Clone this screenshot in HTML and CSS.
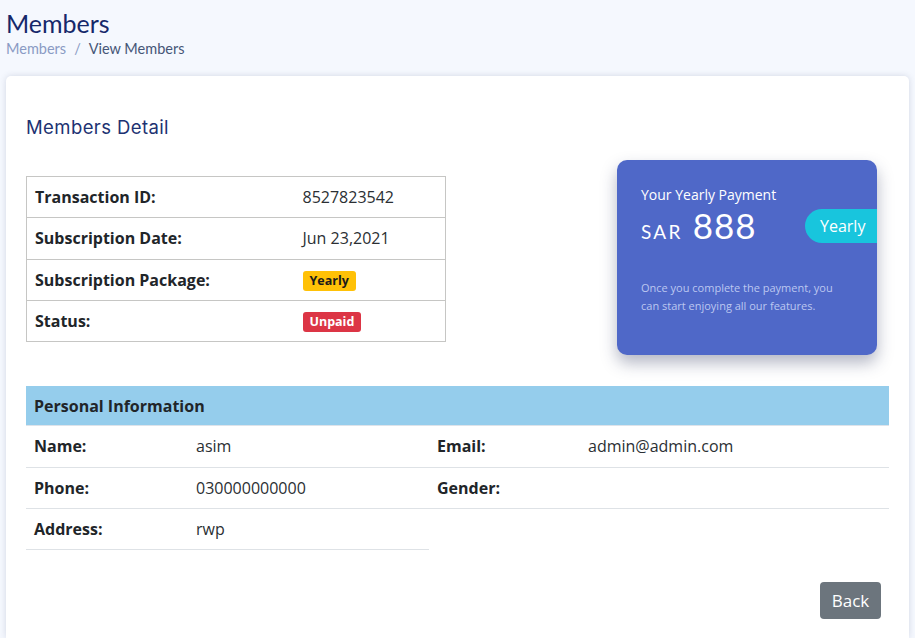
FILE: index.html
```
<!DOCTYPE html>
<html>
<head>
<meta charset="utf-8">
<link rel="stylesheet" href="styles.css">
</head>
<body>
<div class="page-head">
  <h1 class="page-title">Members</h1>
  <div class="crumbs"><span class="crumb-link">Members</span><span class="crumb-sep">/</span><span class="crumb-cur">View Members</span></div>
</div>
<div class="card">
  <h2 class="card-title">Members Detail</h2>
  <div class="top-row">
    <table class="tx-table">
      <tr><th>Transaction ID:</th><td>8527823542</td></tr>
      <tr><th>Subscription Date:</th><td>Jun 23,2021</td></tr>
      <tr><th>Subscription Package:</th><td><span class="badge badge-yellow">Yearly</span></td></tr>
      <tr><th>Status:</th><td><span class="badge badge-red">Unpaid</span></td></tr>
    </table>
    <div class="price-card">
      <div class="price-label">Your Yearly Payment</div>
      <div class="price-amount"><span class="cur">SAR</span><span class="num">888</span></div>
      <div class="price-pill">Yearly</div>
      <p class="price-note">Once you complete the payment, you can start enjoying all our features.</p>
    </div>
  </div>
  <div class="section-head">Personal Information</div>
  <div class="info-grid">
    <table class="info-table info-left">
      <tr><th>Name:</th><td>asim</td></tr>
      <tr><th>Phone:</th><td>030000000000</td></tr>
      <tr><th>Address:</th><td>rwp</td></tr>
    </table>
    <table class="info-table info-right">
      <tr><th>Email:</th><td>admin@admin.com</td></tr>
      <tr><th>Gender:</th><td></td></tr>
    </table>
  </div>
  <div class="actions"><button class="btn-back">Back</button></div>
</div>
</body>
</html>
```
FILE: styles.css
```
* { box-sizing: border-box; }
html, body { margin: 0; padding: 0; }
body {
  background: #f5f8fe;
  font-family: "Open Sans", "Liberation Sans", sans-serif;
  color: #212529;
  padding: 0 6px;
  height: 638px;
  overflow: hidden;
}
.page-head { padding-top: 8px; height: 76px; }
.page-title {
  margin: 0;
  font-family: "Lato", "Open Sans", sans-serif;
  font-weight: 400;
  font-size: 25px;
  line-height: 30px;
  color: #15286a;
}
.crumbs {
  font-family: "Lato", "Open Sans", sans-serif;
  font-size: 14.5px;
  margin-top: 1px;
  line-height: 20px;
}
.crumb-link { color: #8a9bc4; }
.crumb-sep { color: #8a9bc4; margin: 0 8px; }
.crumb-cur { color: #465677; }
.card {
  background: #fff;
  border-radius: 5px 5px 0 0;
  box-shadow: 0 0 6px rgba(60, 70, 110, 0.18);
  padding: 36px 20px 0 20px;
  height: 562px;
}
.card-title {
  margin: 0;
  font-family: "Inter", "Open Sans", sans-serif;
  font-weight: 400;
  font-size: 18.5px;
  letter-spacing: 0.4px;
  line-height: 30px;
  color: #1d3272;
}
.top-row {
  display: flex;
  justify-content: space-between;
  align-items: flex-start;
  margin-top: 18px;
}
.tx-table {
  margin-top: 16px;
  width: 420px;
  border-collapse: collapse;
  border: 1px solid #c6c6c4;
}
.tx-table th, .tx-table td {
  border-top: 1px solid #c6c6c4;
  border-bottom: 1px solid #c6c6c4;
  height: 41.3px;
  padding: 0 8px;
  font-size: 16px;
  text-align: left;
  vertical-align: middle;
}
.tx-table th { width: 268px; font-weight: 700; }
.tx-table td { font-weight: 400; color: #2b2f33; }
.badge {
  display: inline-block;
  font-size: 12.5px;
  font-weight: 700;
  line-height: 20px;
  padding: 0 7px;
  border-radius: 3px;
  vertical-align: middle;
}
.badge-yellow { background: #ffc107; color: #1a1a1a; }
.badge-red { background: #dc3545; color: #fff; }
.price-card {
  position: relative;
  width: 260px;
  height: 195px;
  margin-right: 12px;
  background: #4f68c8;
  border-radius: 10px;
  box-shadow: 0 8px 16px rgba(40, 50, 90, 0.35);
  padding: 26px 24px 0 24px;
  color: #fff;
  font-family: "Lato", "Open Sans", sans-serif;
}
.price-label { font-family: "Open Sans", sans-serif; font-size: 14px; line-height: 18px; }
.price-amount { margin-top: 1px; line-height: 40px; }
.cur { font-size: 19px; letter-spacing: 2.3px; margin-right: 10px; }
.num { font-size: 35px; letter-spacing: 1px; }
.price-pill {
  position: absolute;
  right: 0;
  top: 49px;
  width: 72px;
  height: 34px;
  background: #18c5dd;
  border-radius: 17px 0 0 17px;
  font-family: "Open Sans", sans-serif;
  font-size: 16px;
  line-height: 34px;
  padding-left: 15px;
}
.price-note {
  margin: 26px 0 0 0;
  font-family: "Open Sans", sans-serif;
  font-size: 11px;
  line-height: 18px;
  color: #bcc7f0;
}
.section-head {
  margin-top: 31px;
  background: #95cdec;
  height: 40px;
  line-height: 40px;
  padding-left: 8px;
  font-weight: 700;
  font-size: 16px;
  border-bottom: 1px solid #dde3ea;
}
.info-grid {
  display: grid;
  grid-template-columns: 403px 1fr;
  align-items: start;
}
.info-table { border-collapse: collapse; width: 100%; }
.info-table th, .info-table td {
  height: 41px;
  padding: 0 8px;
  font-size: 16px;
  text-align: left;
  border-bottom: 1px solid #dee2e6;
  vertical-align: middle;
}
.info-table th { font-weight: 700; }
.info-table td { font-weight: 400; color: #2b2f33; }
.info-left th { width: 162px; }
.info-right th { width: 151px; }
.actions { display: flex; justify-content: flex-end; margin-top: 32px; padding-right: 8px; }
.btn-back {
  background: #6c757d;
  color: #fff;
  border: none;
  border-radius: 4px;
  font-family: "Open Sans", sans-serif;
  font-size: 17px;
  width: 61px;
  height: 37px;
  padding: 0;
}
```
